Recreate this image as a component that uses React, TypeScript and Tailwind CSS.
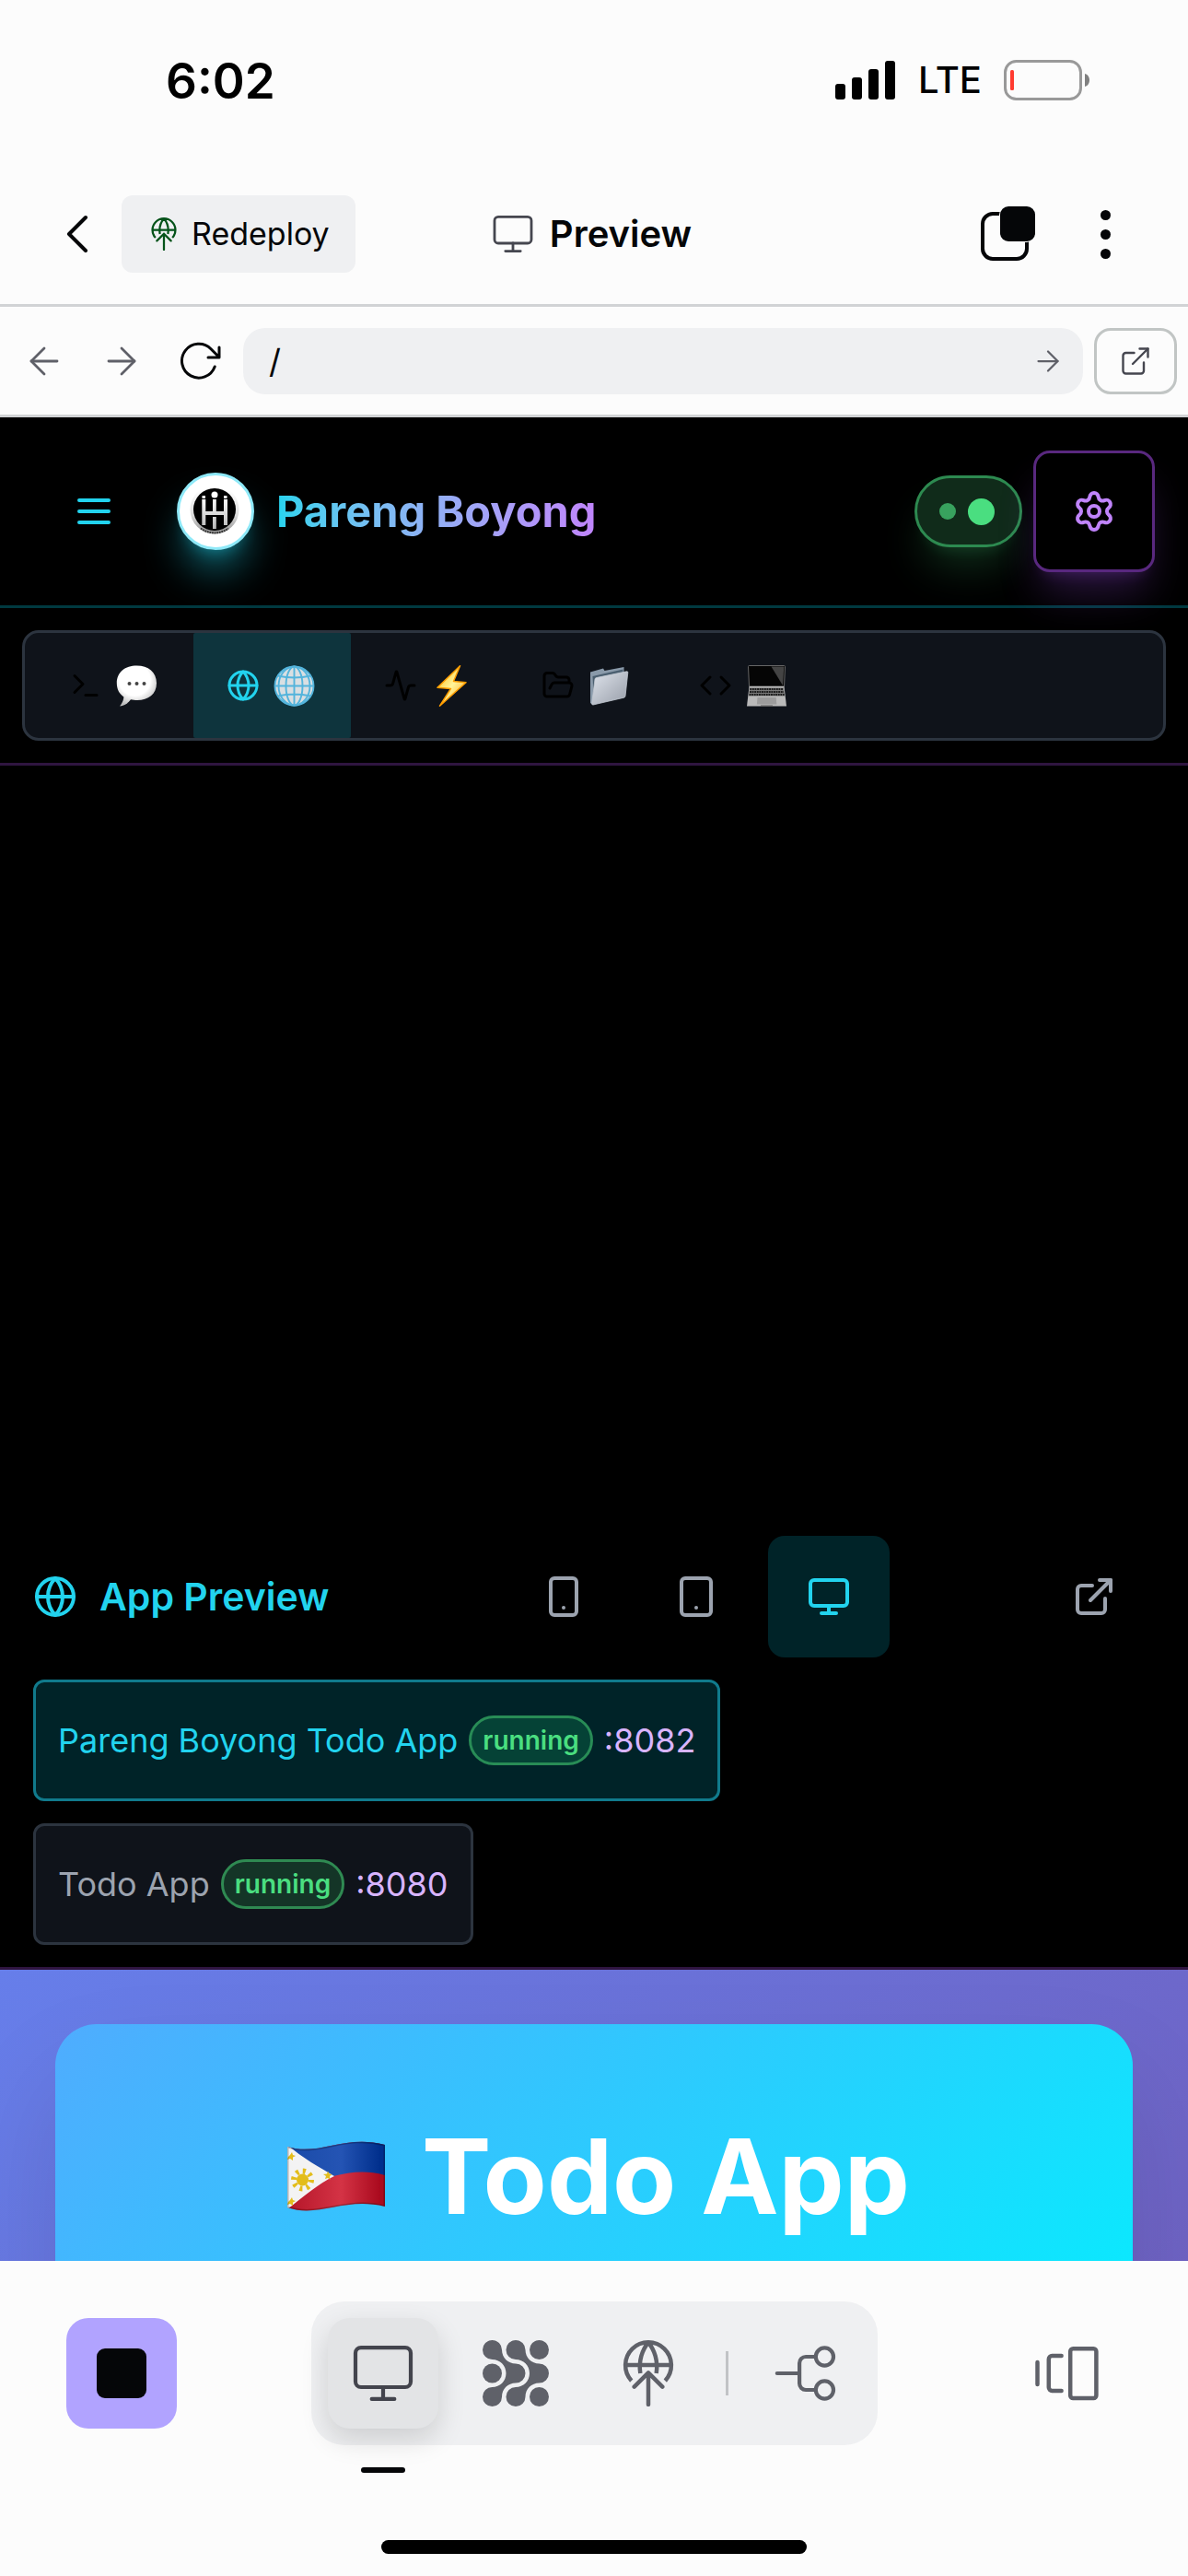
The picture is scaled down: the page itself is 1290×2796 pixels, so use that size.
import type { ReactNode } from "react";
import {
  Activity,
  ArrowLeft,
  ArrowRight,
  Code,
  ExternalLink,
  FolderOpen,
  Globe,
  Monitor,
  Settings,
  Smartphone,
  Tablet,
  Terminal,
} from "lucide-react";

function ScreenIcon({ className }: { className: string }) {
  return (
    <svg viewBox="0 0 24 24" className={className} fill="none" stroke="currentColor" strokeWidth="1.4" strokeLinecap="round" strokeLinejoin="round" aria-hidden="true">
      <rect x="2" y="2.7" width="20" height="14.3" rx="2" />
      <path d="M12 17v4.3M7.9 21.3h8.2" />
    </svg>
  );
}

function DeployIcon({ className }: { className: string }) {
  return (
    <svg viewBox="0 0 24 24" className={className} fill="none" stroke="currentColor" strokeWidth="1.5" strokeLinecap="round" strokeLinejoin="round" aria-hidden="true">
      <path strokeLinecap="butt" d="M5.9 14.7A8.3 8.3 0 1 1 18.1 14.7M3.7 9h16.6M12 .9C9.8 3.4 8.4 7.5 9.1 12M12 .9C14.2 3.4 15.6 7.5 14.9 12" />
      <path d="M12 23.3V11.8M6.9 16.9 12 11.8l5.1 5.1" />
    </svg>
  );
}

function RefreshIcon() {
  return (
    <svg viewBox="0 0 24 24" className="size-12" fill="none" stroke="currentColor" strokeWidth="1.5" strokeLinecap="round" strokeLinejoin="round" aria-hidden="true">
      <path d="M20.6 15A9.2 9.2 0 1 1 18.5 5.4L23 9.9M23 4.5v5.5h-6" />
    </svg>
  );
}

function TabsIcon() {
  return (
    <svg viewBox="0 0 60 60" className="size-15" aria-hidden="true">
      <rect x="3" y="8" width="48" height="49" rx="11" fill="none" stroke="#050608" strokeWidth="4" />
      <rect x="21" y="-1" width="40" height="40" rx="10" fill="#fcfcfc" />
      <rect x="22" y="0" width="38" height="38" rx="9" fill="#050608" />
    </svg>
  );
}

function MeshIcon() {
  const arm =
    "M3.5 0A3.5 3.5 0 0 1 7 3.5C7 6.3 9.2 8.5 12 8.5a3.5 3.5 0 0 1 0 7C9.2 15.5 7 17.7 7 20.5A3.5 3.5 0 1 1 3.5 17C6.3 17 8.5 14.8 8.5 12S6.3 7 3.5 7a3.5 3.5 0 0 1 0-7z";
  return (
    <svg viewBox="0 0 24 24" className="size-18" fill="currentColor" aria-hidden="true">
      <path d={arm} />
      <path d={arm} transform="translate(8.5 0)" />
      <circle cx="20.5" cy="3.5" r="3.5" />
      <circle cx="3.5" cy="12" r="3.5" />
      <circle cx="20.5" cy="20.5" r="3.5" />
    </svg>
  );
}

function BranchIcon() {
  return (
    <svg viewBox="0 0 24 24" className="size-18" fill="none" stroke="currentColor" strokeWidth="1.4" strokeLinecap="round" aria-hidden="true">
      <path d="M1.6 12h8.1M15.4 6H12a2.3 2.3 0 0 0-2.3 2.3v7.4A2.3 2.3 0 0 0 12 18h3.4" />
      <circle cx="18.8" cy="6" r="3.2" />
      <circle cx="18.8" cy="18" r="3.2" />
    </svg>
  );
}

function CarouselIcon() {
  return (
    <svg viewBox="0 0 24 24" className="size-18" fill="none" stroke="currentColor" strokeWidth="1.5" strokeLinecap="round" strokeLinejoin="round" aria-hidden="true">
      <path d="M1.5 8v8M10.2 5.7H6.8a1.2 1.2 0 0 0-1.2 1.2v10.2a1.2 1.2 0 0 0 1.2 1.2h3.4" />
      <rect x="13.4" y="3.1" width="9.4" height="17.9" rx="1" />
    </svg>
  );
}

function SignalIcon() {
  return (
    <svg viewBox="0 0 66 42" className="h-[42px] w-[66px]" aria-hidden="true">
      <rect x="0" y="25" width="11" height="17" rx="3" />
      <rect x="18" y="18" width="11" height="24" rx="3" />
      <rect x="36" y="9" width="11" height="33" rx="3" />
      <rect x="54" y="0" width="11" height="42" rx="3" />
    </svg>
  );
}

function BatteryIcon() {
  return (
    <svg viewBox="0 0 94 44" className="h-11 w-[94px]" aria-label="Battery low">
      <rect x="1.5" y="1.5" width="82" height="41" rx="12" fill="none" stroke="#999" strokeWidth="3" />
      <path d="M88 15c3.500 1 5 4 5 7s-1.500 6-5 7z" fill="#808080" />
      <rect x="7" y="11" width="4" height="22" rx="1.500" fill="#ff3b30" />
    </svg>
  );
}

function BrandMark() {
  return (
    <svg viewBox="0 0 84 84" className="size-21" aria-hidden="true">
      <defs>
        <linearGradient id="ring" x1="0" y1="0" x2="0" y2="1">
          <stop offset="0.1" stopColor="#fff" />
          <stop offset="0.6" stopColor="#ddd" />
          <stop offset="1" stopColor="#8f8f8f" />
        </linearGradient>
        <linearGradient id="bar" gradientUnits="userSpaceOnUse" x1="0" y1="28" x2="0" y2="62">
          <stop offset="0" stopColor="#fff" />
          <stop offset="1" stopColor="#b5b5b5" />
        </linearGradient>
      </defs>
      <circle cx="42" cy="42" r="40.500" fill="#fff" stroke="#8ee9f8" strokeWidth="3" />
      <circle cx="41" cy="40" r="26.500" fill="url(#ring)" />
      <path d="M26 60.500A25.500 25.500 0 0 0 56 60.500" fill="none" stroke="#333" strokeWidth="2" strokeDasharray="1.800 .8" />
      <circle cx="41" cy="40" r="23" fill="#000" />
      <g fill="url(#bar)">
        <rect x="27.300" y="29" width="4" height="28" />
        <rect x="51" y="29" width="4" height="28" />
        <rect x="31" y="42" width="20.500" height="4" />
        <rect x="39" y="29" width="3.800" height="13" />
        <rect x="39" y="48" width="3.800" height="13" />
        <rect x="27.500" y="25" width="3.500" height="3" />
        <rect x="51" y="25" width="3.500" height="3" />
        <circle cx="41" cy="24" r="3.500" fill="#fff" />
      </g>
    </svg>
  );
}

function SpeechEmoji() {
  return (
    <svg viewBox="0 0 45 45" className="size-[45px]" aria-hidden="true">
      <defs>
        <radialGradient id="speech" cx="0.45" cy="0.35" r="0.65">
          <stop offset="0.6" stopColor="#fff" />
          <stop offset="1" stopColor="#bdbdbd" />
        </radialGradient>
      </defs>
      <path d="M22.500.5C35 .5 44 7.500 44 19.500S35 38 23 38c-2.500 0-5-.2-7-.7-2.500 3.500-6.500 6.700-12 7.200 2-2.500 4.200-6 4.400-10C3.500 31 .8 26 .8 19.500.8 7.500 10 .5 22.500.5z" fill="url(#speech)" />
      <g fill="#444">
        <circle cx="14.500" cy="20" r="2" />
        <circle cx="22.500" cy="20" r="2" />
        <circle cx="30.500" cy="20" r="2" />
      </g>
    </svg>
  );
}

function MeridianEmoji() {
  return (
    <svg viewBox="0 0 45 45" className="size-[45px]" aria-hidden="true">
      <circle cx="22.500" cy="22.500" r="21.300" fill="#d9dfe2" />
      <g fill="none" stroke="#53b4dc" strokeWidth="1.900">
        <circle cx="22.500" cy="22.500" r="21" />
        <ellipse cx="22.500" cy="22.500" rx="9" ry="21" />
        <ellipse cx="22.500" cy="22.500" rx="17" ry="21" />
        <path d="M22.500 1v43M1 22.500h43M4.500 11.500c11 2.500 25 2.500 36 0M4.500 33.500c11-2.500 25-2.500 36 0" />
      </g>
    </svg>
  );
}

function BoltEmoji() {
  return (
    <svg viewBox="0 0 45 45" className="size-[45px]" aria-hidden="true">
      <defs>
        <linearGradient id="bolt" x1="0" y1="0" x2="1" y2="1">
          <stop offset="0" stopColor="#ffb300" />
          <stop offset="0.5" stopColor="#fff59a" />
          <stop offset="1" stopColor="#ff9500" />
        </linearGradient>
      </defs>
      <path d="M31.500.8 7 24.300l14.500 1.200L9.500 44.200 38 18.700l-13.500-1.200z" fill="url(#bolt)" stroke="#ff9d00" strokeWidth="1.500" strokeLinejoin="round" />
    </svg>
  );
}

function FolderEmoji() {
  return (
    <svg viewBox="0 0 45 45" className="size-[45px]" aria-hidden="true">
      <defs>
        <linearGradient id="folder" x1="0" y1="0" x2="1" y2="1">
          <stop offset="0" stopColor="#dfe4ec" />
          <stop offset="1" stopColor="#979da8" />
        </linearGradient>
      </defs>
      <path d="M2 7.500 16 3.500 17.500 6 38.500 2v32L4 42.500 2 41z" fill="#8a9aaa" />
      <path d="M4.500 12 37.500 4.500V30L6 38z" fill="#4b5f70" />
      <path d="M7 15.200Q7.200 14 8.500 13.600L41.500 6.800Q43 6.600 42.800 8L40 33.500Q39.900 34.800 38.600 35.200L5 43Q3.500 43 3.700 41.500z" fill="url(#folder)" stroke="#c3c9d2" strokeWidth=".8" />
    </svg>
  );
}

function LaptopEmoji() {
  return (
    <svg viewBox="0 0 45 45" className="size-[45px]" aria-hidden="true">
      <path d="M3.500.5h38q1 0 1 1L41.500 23h-38L2.500 1.500q0-1 1-1z" fill="#050505" stroke="#666" strokeWidth="1" />
      <path d="M27.500 1.500h13.800L40 22z" fill="#444" />
      <path d="M3.500 23h38L44 44.500H1z" fill="#b9b9b9" />
      <path d="M4 24.500h37l1.200 9H2.900z" fill="#777" />
      <path d="M4.300 26h36.400M4 29h37M3.600 32h38" stroke="#1c1c1c" strokeWidth="1.900" strokeDasharray="1.900 .7" />
      <path d="M12.500 35h20.200l.6 7.500H11.900z" fill="#9c9c9c" />
      <path d="M16 43.500h13v1H16z" fill="#555" />
    </svg>
  );
}

function FlagEmoji() {
  return (
    <svg viewBox="-10 0 116 76" className="h-[76px] w-[116px]" aria-label="Philippines">
      <defs>
        <linearGradient id="flagBlue" x1="0" y1="0" x2="1" y2="0">
          <stop offset="0" stopColor="#1a4ba8" />
          <stop offset="0.55" stopColor="#2454b4" />
          <stop offset="0.95" stopColor="#002f8c" />
        </linearGradient>
        <linearGradient id="flagRed" x1="0" y1="0" x2="1" y2="0">
          <stop offset="0" stopColor="#b41528" />
          <stop offset="0.55" stopColor="#d43345" />
          <stop offset="0.95" stopColor="#aa0a1e" />
        </linearGradient>
        <clipPath id="wave">
          <path d="M0 6C34 17 62-8 106 4V71C62 60 34 84 0 72z" />
        </clipPath>
      </defs>
      <g clipPath="url(#wave)">
        <rect width="106" height="76" fill="url(#flagRed)" />
        <path d="M0 0H106V37C84 31 68 34 50 38L0 40z" fill="url(#flagBlue)" />
        <path d="M0 4 C16 18 36 29 51 38 C34 46 18 60 0 74z" fill="#f3f3f3" />
        <g fill="#e3bd1b">
          <circle cx="16.500" cy="42" r="6.500" />
          <path d="M3 15l2-3 1 3 3 1-3 1.500V21l-3-2-3 1 1-3zM41 41l1-3-3-2 4-.5 1-3 1.500 3 3 .5-2.500 2 .5 4-2.500-2zM3 64l2-3 1 3 3 1-3 1.500V70l-3-2-3 1 1-3z" />
        </g>
        <circle cx="16.500" cy="42" r="9.500" fill="none" stroke="#e3bd1b" strokeWidth="6" strokeDasharray="3 4.460" />
        <path d="M0 6C34 17 62-8 106 4V71C62 60 34 84 0 72z" fill="none" stroke="#000" strokeOpacity=".25" strokeWidth="3" />
      </g>
    </svg>
  );
}

function StatusBar() {
  return (
    <div className="flex h-[178px] items-start justify-between pl-[180px] pr-[106px] pt-[58px] text-black">
      <span className="text-[53px]/[60px] font-semibold">6:02</span>
      <div className="flex h-[58px] items-center gap-6">
        <SignalIcon />
        <span className="text-[40px]/[58px] font-medium">LTE</span>
        <BatteryIcon />
      </div>
    </div>
  );
}

function TopBar() {
  return (
    <header className="grid h-[155px] grid-cols-[1fr_auto_1fr] items-center border-b-[3px] border-[#d1d3d5] pl-9 pr-[42px] text-[#050608]">
      <div className="flex items-center">
        <button aria-label="Back" className="flex h-21 w-24 items-center justify-center">
          <svg viewBox="0 0 24 42" className="h-[42px] w-6" fill="none" stroke="currentColor" strokeWidth="4" strokeLinecap="round" strokeLinejoin="round" aria-hidden="true">
            <path d="M21 3 3 21l18 18" />
          </svg>
        </button>
        <button className="flex h-21 items-center gap-3 rounded-xl bg-[#eff0f2] px-7">
          <DeployIcon className="size-9 text-[#05531a]" />
          <span className="text-[34px]/[48px]">Redeploy</span>
        </button>
      </div>
      <h1 className="flex items-center gap-4 text-[40px]/[48px] font-semibold">
        <ScreenIcon className="size-12 text-[#45464f]" />
        Preview
      </h1>
      <div className="flex items-center justify-end gap-2.5">
        <button aria-label="Open tabs" className="flex size-24 items-center justify-center">
          <TabsIcon />
        </button>
        <button aria-label="More" className="flex size-24 flex-col items-center justify-center gap-2.5">
          <span className="size-[11px] rounded-full bg-[#050608]" />
          <span className="size-[11px] rounded-full bg-[#050608]" />
          <span className="size-[11px] rounded-full bg-[#050608]" />
        </button>
      </div>
    </header>
  );
}

function AddressBar() {
  return (
    <div className="flex h-[120px] items-center border-b-[3px] border-[#d1d3d5] pl-1.5 pr-3 text-[#5f6068]">
      <button aria-label="Go back" className="flex h-18 w-21 items-center justify-center">
        <ArrowLeft className="size-12" strokeWidth={1.4} />
      </button>
      <button aria-label="Go forward" className="flex h-18 w-21 items-center justify-center">
        <ArrowRight className="size-12" strokeWidth={1.4} />
      </button>
      <button aria-label="Reload" className="flex h-18 w-21 items-center justify-center text-[#050608]">
        <RefreshIcon />
      </button>
      <form className="ml-1.5 flex h-18 min-w-0 flex-1 items-center rounded-3xl bg-[#eff0f2] pl-7 pr-5">
        <input aria-label="Path" defaultValue="/" className="min-w-0 flex-1 bg-transparent text-[36px]/[48px] text-[#050608] outline-none" />
        <button type="button" aria-label="Go">
          <ArrowRight className="size-9" strokeWidth={1.5} />
        </button>
      </form>
      <button aria-label="Open in new tab" className="ml-3 flex h-18 w-[90px] items-center justify-center rounded-[18px] border-[3px] border-[#c1c5c4] text-[#45464f]">
        <ExternalLink className="size-9" strokeWidth={1.6} />
      </button>
    </div>
  );
}

function AppHeader() {
  return (
    <header className="flex items-center justify-between border-b-[3px] border-[#003940] p-9">
      <div className="flex items-center gap-6">
        <button aria-label="Menu" className="flex size-33 items-center justify-center text-[#22d3ee]">
          <svg viewBox="0 0 24 24" className="size-12" fill="none" stroke="currentColor" strokeWidth="2" strokeLinecap="round" aria-hidden="true">
            <path d="M4 6h16M4 12h16M4 18h16" />
          </svg>
        </button>
        <div className="rounded-full shadow-[0_30px_45px_-9px_rgba(34,211,238,0.5),0_12px_18px_-12px_rgba(34,211,238,0.5)]">
          <BrandMark />
        </div>
        <h2 className="bg-linear-to-r from-[#22d3ee] to-[#c084fc] bg-clip-text text-[47px]/[60px] font-bold text-transparent">
          Pareng Boyong
        </h2>
      </div>
      <div className="flex items-center gap-3">
        <button
          aria-label="Connection status"
          className="flex h-[78px] items-center gap-[13px] rounded-full border-[3px] border-[#2d8a50] bg-[#102b1a] pl-6 pr-[27px] shadow-[0_30px_45px_-9px_rgba(74,222,128,0.2),0_12px_18px_-12px_rgba(74,222,128,0.2)]"
        >
          <span className="size-[18px] rounded-full bg-[#38a25e]" />
          <span className="size-[29px] rounded-full bg-[#4ade80]" />
        </button>
        <button
          aria-label="Settings"
          className="flex size-33 items-center justify-center rounded-[18px] border-[3px] border-[#59287f] bg-black text-[#c084fc] shadow-[0_30px_45px_-9px_rgba(168,85,247,0.25),0_12px_18px_-12px_rgba(168,85,247,0.25)]"
        >
          <Settings className="size-12" />
        </button>
      </div>
    </header>
  );
}

const tabs: { name: string; icon: ReactNode; emoji: ReactNode; active?: boolean }[] = [
  { name: "Chat", icon: <Terminal className="size-9" />, emoji: <SpeechEmoji /> },
  { name: "Preview", icon: <Globe className="size-9" />, emoji: <MeridianEmoji />, active: true },
  { name: "Activity", icon: <Activity className="size-9" />, emoji: <BoltEmoji /> },
  { name: "Files", icon: <FolderOpen className="size-9" />, emoji: <FolderEmoji /> },
  { name: "Code", icon: <Code className="size-9" />, emoji: <LaptopEmoji /> },
];

function TabStrip() {
  return (
    <div className="border-b-[3px] border-[#2f1540] p-6">
      <div role="tablist" className="flex h-[120px] rounded-[18px] border-[3px] border-[#2c343f] bg-[#0f131a] px-3">
        {tabs.map((tab) => (
          <button
            key={tab.name}
            role="tab"
            aria-label={tab.name}
            aria-selected={!!tab.active}
            className={`flex w-[171px] items-center gap-[15px] rounded-xs pl-9 ${tab.active ? "bg-[#0e343d] text-[#22d3ee]" : "text-black"}`}
          >
            {tab.icon}
            {tab.emoji}
          </button>
        ))}
      </div>
    </div>
  );
}

function AppCard({ name, port, active }: { name: string; port: string; active?: boolean }) {
  return (
    <button
      className={`flex h-33 items-center gap-3 rounded-xl border-[3px] px-6 text-[36px]/[54px] ${active ? "border-[#107a8c] bg-[#002328] text-[#22d3ee]" : "border-[#2c343f] bg-[#0f131a] text-[#9ca3af]"}`}
    >
      <span>{name}</span>
      <span
        className={`flex h-[54px] items-center rounded-full border-[3px] px-3 text-[28px]/[36px] font-semibold text-[#4ade80] ${active ? "border-[#288c56] bg-[#054236]" : "border-[#2f8a52] bg-[#143527]"}`}
      >
        running
      </span>
      <span className="text-[#d8b4fe]">{port}</span>
    </button>
  );
}

function PreviewPanel() {
  return (
    <section className="flex flex-col gap-6 border-b-[3px] border-[#2f1540] px-9 py-6">
      <div className="flex items-center justify-between">
        <h3 className="flex items-center gap-6 text-[41px]/[54px] font-semibold text-[#22d3ee]">
          <Globe className="size-12" />
          App Preview
        </h3>
        <div className="flex items-center text-[#9ca3af]">
          <div className="mr-39 flex gap-3">
            <button aria-label="Phone" className="flex size-33 items-center justify-center">
              <Smartphone className="size-12" />
            </button>
            <button aria-label="Tablet" className="flex size-33 items-center justify-center">
              <Tablet className="size-12" />
            </button>
            <button aria-label="Desktop" className="flex size-33 items-center justify-center rounded-[18px] bg-[#002328] text-[#22d3ee]">
              <Monitor className="size-12" />
            </button>
          </div>
          <button aria-label="Open preview" className="flex size-33 items-center justify-center">
            <ExternalLink className="size-12" />
          </button>
        </div>
      </div>
      <div className="flex flex-col items-start gap-6">
        <AppCard name="Pareng Boyong Todo App" port=":8082" active />
        <AppCard name="Todo App" port=":8080" />
      </div>
    </section>
  );
}

function TodoFrame() {
  return (
    <section className="h-[316px] overflow-hidden">
      <div className="h-[1700px] bg-[linear-gradient(135deg,#667eea,#764ba2)] px-15 pt-[59px]">
        <div className="h-[500px] rounded-t-[45px] bg-[linear-gradient(135deg,#4facfe,#00f2fe)] pt-[93px] shadow-[0_60px_120px_rgba(0,0,0,0.1)]">
          <h2 className="flex items-center justify-center gap-10 text-[113px]/[144px] font-bold text-white">
            <FlagEmoji />
            Todo App
          </h2>
        </div>
      </div>
    </section>
  );
}

function BottomBar() {
  return (
    <footer className="text-[#5f6169]">
      <div className="flex items-center justify-between px-18 pt-11">
        <button aria-label="Stop" className="flex size-30 items-center justify-center rounded-3xl bg-[#b1a3ff]">
          <span className="size-[54px] rounded-[9px] bg-[#050608]" />
        </button>
        <nav className="flex h-39 items-center gap-6 rounded-[36px] bg-[#eff0f2] px-[18px]">
          <button
            aria-label="Preview"
            className="relative flex size-30 items-center justify-center rounded-3xl bg-[#e3e4e6] text-[#43444d] shadow-[0_12px_30px_rgba(0,0,0,0.14)]"
          >
            <ScreenIcon className="size-18" />
            <span className="absolute -bottom-12 left-9 h-1.5 w-12 rounded-full bg-[#050608]" />
          </button>
          <button aria-label="Agent" className="flex size-30 items-center justify-center">
            <MeshIcon />
          </button>
          <button aria-label="Deploy" className="flex size-30 items-center justify-center">
            <DeployIcon className="size-18" />
          </button>
          <span className="h-12 w-[3px] bg-[#c1c3c6]" />
          <button aria-label="Version control" className="flex size-30 items-center justify-center">
            <BranchIcon />
          </button>
        </nav>
        <button aria-label="Switch tabs" className="flex size-30 items-center justify-center">
          <CarouselIcon />
        </button>
      </div>
      <div className="flex justify-center pb-6 pt-[103px]">
        <span className="h-[15px] w-[462px] rounded-full bg-black" />
      </div>
    </footer>
  );
}

export default function App() {
  return (
    <div className="flex min-h-screen flex-col bg-[#fcfcfc] font-[Inter,sans-serif]">
      <StatusBar />
      <TopBar />
      <AddressBar />
      <main className="flex flex-1 flex-col bg-black">
        <AppHeader />
        <TabStrip />
        <div className="flex-1" />
        <PreviewPanel />
        <TodoFrame />
      </main>
      <BottomBar />
    </div>
  );
}
